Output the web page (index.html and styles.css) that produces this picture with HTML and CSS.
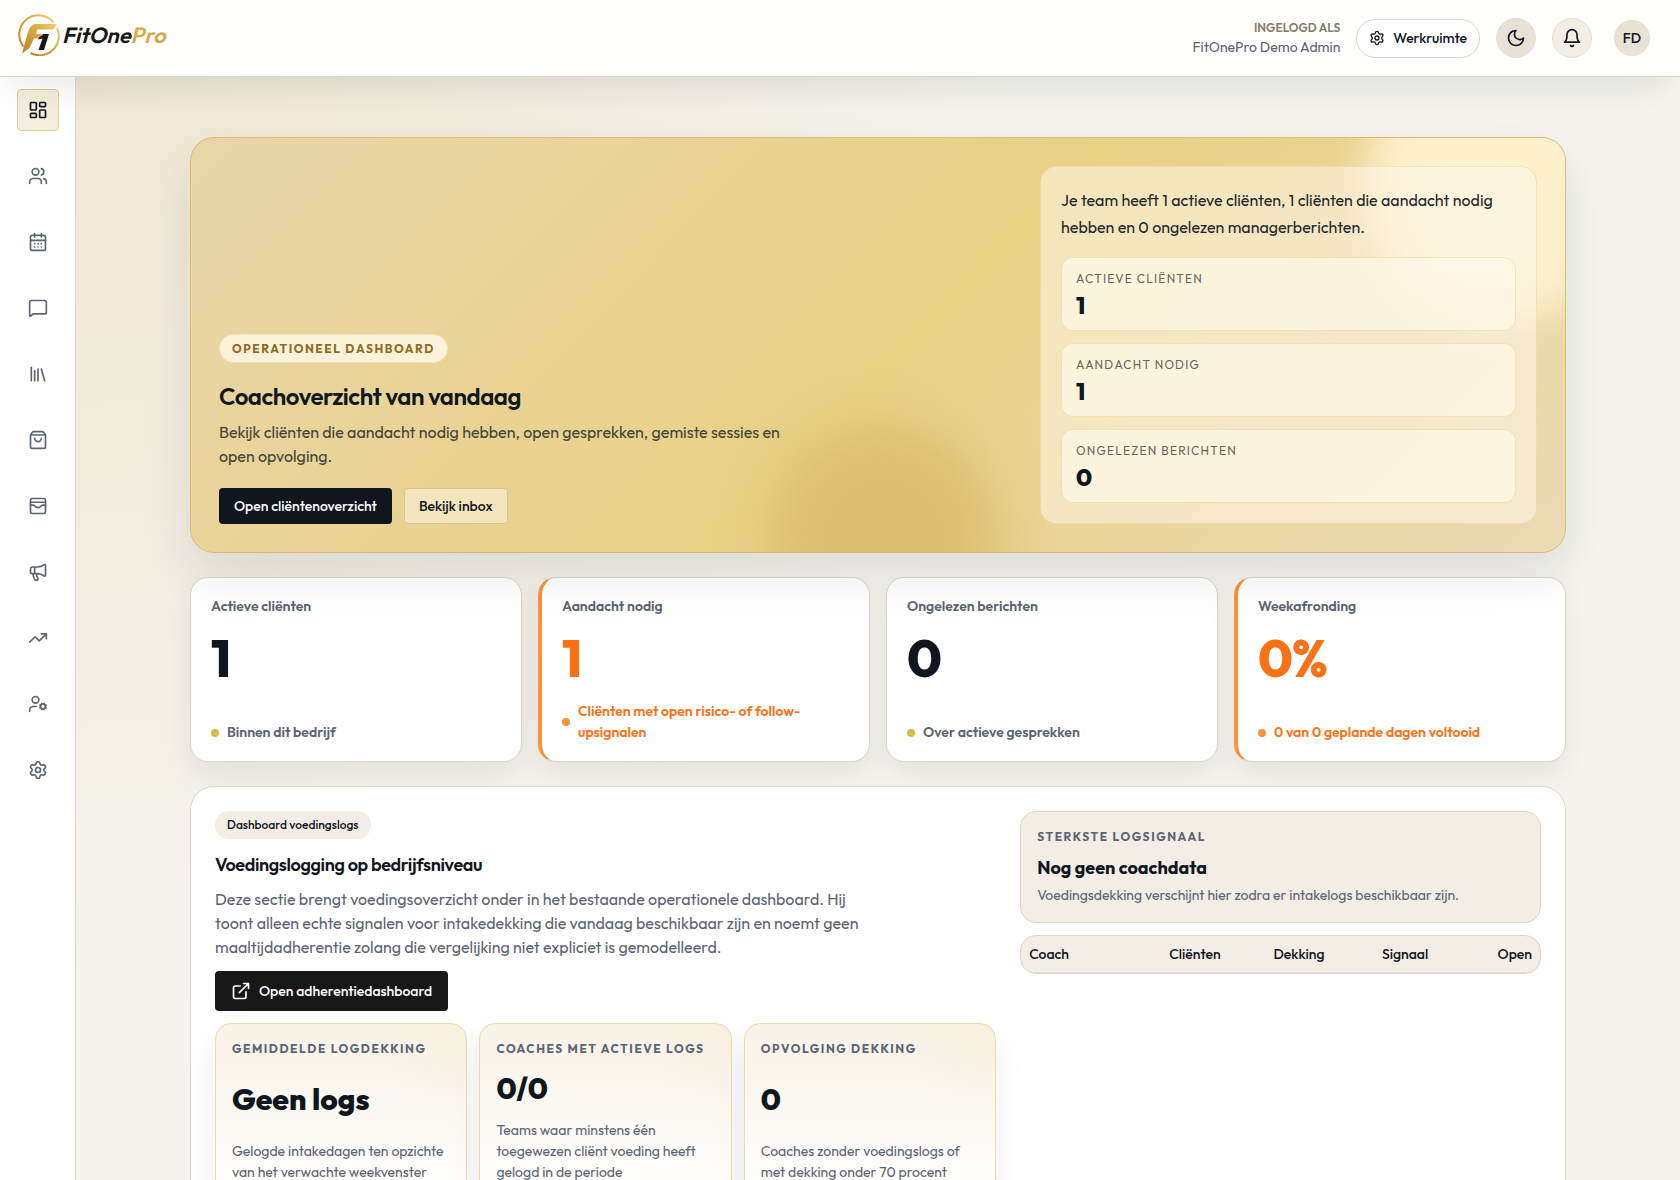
FILE: index.html
```html
<!DOCTYPE html>
<html lang="nl">
<head>
<meta charset="utf-8">
<meta name="viewport" content="width=device-width, initial-scale=1">
<title>FitOnePro – Dashboard</title>
<link rel="stylesheet" href="styles.css">
</head>
<body>
<header class="topbar">
  <a class="logo" href="#" aria-label="FitOnePro">
    <svg class="logo-mark" viewBox="0 0 42 42" aria-hidden="true">
      <defs>
        <linearGradient id="gold" x1="0" y1="1" x2="1" y2="0">
          <stop offset="0" stop-color="#b9822a"/><stop offset=".55" stop-color="#d8a63f"/><stop offset="1" stop-color="#f0d070"/>
        </linearGradient>
      </defs>
      <path d="M35.500 8.500A19.200 19.200 0 0 0 5.500 32.500" fill="none" stroke="url(#gold)" stroke-width="2"/>
      <path d="M39 14A19.200 19.200 0 0 1 12.500 39" fill="none" stroke="url(#gold)" stroke-width="2"/>
      <path d="M16.500 10H39L35 15.500H19.500L18 20H27L23.500 24.500H16L11.500 34L4 39.500L10 18Q12.500 11 16.500 10Z" fill="url(#gold)"/>
      <path d="M25.500 20H31L26 36H20.500L24.500 24.500L20 25.500L21.500 23Q24 22 25.500 20Z" fill="#181818"/>
    </svg>
    <span class="logo-text">FitOne<span class="logo-pro">Pro</span></span>
  </a>
  <div class="topbar-tools">
    <div class="session"><span class="session-label">INGELOGD ALS</span><span class="session-name">FitOnePro Demo Admin</span></div>
    <button class="workspace" type="button">
      <svg class="icon-sm" viewBox="0 0 24 24"><path d="M9.671 4.136a2.340 2.340 0 0 1 4.659 0 2.340 2.340 0 0 0 3.319 1.915 2.340 2.340 0 0 1 2.330 4.033 2.340 2.340 0 0 0 0 3.831 2.340 2.340 0 0 1-2.330 4.033 2.340 2.340 0 0 0-3.319 1.915 2.340 2.340 0 0 1-4.659 0 2.340 2.340 0 0 0-3.320-1.915 2.340 2.340 0 0 1-2.330-4.033 2.340 2.340 0 0 0 0-3.831A2.340 2.340 0 0 1 6.350 6.051a2.340 2.340 0 0 0 3.319-1.915"/><circle cx="12" cy="12" r="3"/></svg>
      Werkruimte
    </button>
    <button class="round round-dark" type="button" aria-label="Donkere modus"><svg class="icon" viewBox="0 0 24 24"><path d="M12 3a6 6 0 0 0 9 9 9 9 0 1 1-9-9Z"/></svg></button>
    <button class="round" type="button" aria-label="Meldingen"><svg class="icon" viewBox="0 0 24 24"><path d="M6 8a6 6 0 0 1 12 0c0 7 3 9 3 9H3s3-2 3-9"/><path d="M10.300 21a1.940 1.940 0 0 0 3.400 0"/></svg></button>
    <button class="avatar" type="button" aria-label="Account">FD</button>
  </div>
</header>
<div class="shell">
  <nav class="sidebar" aria-label="Hoofdmenu">
    <a class="nav-item active" href="#" aria-label="Dashboard"><svg class="icon" viewBox="0 0 24 24"><rect x="3" y="3" width="7" height="9" rx="1"/><rect x="14" y="3" width="7" height="5" rx="1"/><rect x="14" y="12" width="7" height="9" rx="1"/><rect x="3" y="16" width="7" height="5" rx="1"/></svg></a>
    <a class="nav-item" href="#" aria-label="Cliënten"><svg class="icon" viewBox="0 0 24 24"><path d="M16 21v-2a4 4 0 0 0-4-4H6a4 4 0 0 0-4 4v2"/><circle cx="9" cy="7" r="4"/><path d="M22 21v-2a4 4 0 0 0-3-3.870"/><path d="M16 3.130a4 4 0 0 1 0 7.750"/></svg></a>
    <a class="nav-item" href="#" aria-label="Agenda"><svg class="icon" viewBox="0 0 24 24"><rect x="3" y="4" width="18" height="18" rx="2"/><path d="M16 2v4M8 2v4M3 10h18M8 14h.01M12 14h.01M16 14h.01M8 18h.01M12 18h.01M16 18h.01"/></svg></a>
    <a class="nav-item" href="#" aria-label="Berichten"><svg class="icon" viewBox="0 0 24 24"><path d="M22 17a2 2 0 0 1-2 2H6.828a2 2 0 0 0-1.414.586l-2.202 2.202A.710.710 0 0 1 2 21.286V5a2 2 0 0 1 2-2h16a2 2 0 0 1 2 2z"/></svg></a>
    <a class="nav-item" href="#" aria-label="Bibliotheek"><svg class="icon" viewBox="0 0 24 24"><path d="m16 6 4 14M12 6v14M8 8v12M4 4v16"/></svg></a>
    <a class="nav-item" href="#" aria-label="Winkel"><svg class="icon" viewBox="0 0 24 24"><path d="M3.103 6.034h17.794M3.400 5.467a2 2 0 0 0-.400 1.200V20a2 2 0 0 0 2 2h14a2 2 0 0 0 2-2V6.667a2 2 0 0 0-.400-1.200l-2-2.667A2 2 0 0 0 17 2H7a2 2 0 0 0-1.600.800zM16 10a4 4 0 0 1-8 0"/></svg></a>
    <a class="nav-item" href="#" aria-label="Betalingen"><svg class="icon" viewBox="0 0 24 24"><rect x="3" y="3" width="18" height="18" rx="2"/><path d="M3 7.500h18M3 11h3c.800 0 1.600.300 2.100.900l1.100.900c1.600 1.600 4.100 1.600 5.700 0l1.100-.900c.500-.500 1.300-.900 2.100-.900H21"/></svg></a>
    <a class="nav-item" href="#" aria-label="Marketing"><svg class="icon" viewBox="0 0 24 24"><path d="M11 6a13 13 0 0 0 8.400-2.800A1 1 0 0 1 21 4v12a1 1 0 0 1-1.600.800A13 13 0 0 0 11 14H5a2 2 0 0 1-2-2V8a2 2 0 0 1 2-2zM6 14a12 12 0 0 0 2.400 7.200 2 2 0 0 0 3.200-2.400A8 8 0 0 1 10 14M8 6v8"/></svg></a>
    <a class="nav-item" href="#" aria-label="Voortgang"><svg class="icon" viewBox="0 0 24 24"><path d="M16 7h6v6"/><path d="m22 7-8.500 8.500-5-5L2 17"/></svg></a>
    <a class="nav-item" href="#" aria-label="Teambeheer"><svg class="icon" viewBox="0 0 24 24"><path d="M10 15H6a4 4 0 0 0-4 4v2"/><circle cx="9" cy="7" r="4"/><circle cx="18" cy="15" r="3"/><path d="m14.305 16.530.923-.382M15.228 13.852l-.923-.383M16.852 12.228l-.383-.923M16.852 17.772l-.383.924M19.148 12.228l.383-.923M19.530 18.696l-.382-.924M20.772 13.852l.924-.383M20.772 16.148l.924.383"/></svg></a>
    <a class="nav-item" href="#" aria-label="Instellingen"><svg class="icon" viewBox="0 0 24 24"><path d="M9.671 4.136a2.340 2.340 0 0 1 4.659 0 2.340 2.340 0 0 0 3.319 1.915 2.340 2.340 0 0 1 2.330 4.033 2.340 2.340 0 0 0 0 3.831 2.340 2.340 0 0 1-2.330 4.033 2.340 2.340 0 0 0-3.319 1.915 2.340 2.340 0 0 1-4.659 0 2.340 2.340 0 0 0-3.320-1.915 2.340 2.340 0 0 1-2.330-4.033 2.340 2.340 0 0 0 0-3.831A2.340 2.340 0 0 1 6.350 6.051a2.340 2.340 0 0 0 3.319-1.915"/><circle cx="12" cy="12" r="3"/></svg></a>
  </nav>
  <main class="main">
    <div class="content">
      <section class="hero">
        <div class="hero-intro">
          <span class="hero-badge">OPERATIONEEL DASHBOARD</span>
          <h1 class="hero-title">Coachoverzicht van vandaag</h1>
          <p class="hero-text">Bekijk cliënten die aandacht nodig hebben, open gesprekken, gemiste sessies en open opvolging.</p>
          <div class="hero-actions">
            <button class="btn btn-dark" type="button">Open cliëntenoverzicht</button>
            <button class="btn btn-light" type="button">Bekijk inbox</button>
          </div>
        </div>
        <div class="brief">
          <p class="brief-text">Je team heeft 1 actieve cliënten, 1 cliënten die aandacht nodig hebben en 0 ongelezen managerberichten.</p>
          <div class="brief-stat"><span class="brief-label">ACTIEVE CLIËNTEN</span><strong class="brief-value">1</strong></div>
          <div class="brief-stat"><span class="brief-label">AANDACHT NODIG</span><strong class="brief-value">1</strong></div>
          <div class="brief-stat"><span class="brief-label">ONGELEZEN BERICHTEN</span><strong class="brief-value">0</strong></div>
        </div>
      </section>
      <section class="kpis">
        <article class="kpi"><h2 class="kpi-label">Actieve cliënten</h2><strong class="kpi-value">1</strong><p class="kpi-note"><span class="dot"></span>Binnen dit bedrijf</p></article>
        <article class="kpi alert"><h2 class="kpi-label">Aandacht nodig</h2><strong class="kpi-value">1</strong><p class="kpi-note"><span class="dot"></span>Cliënten met open risico- of follow-upsignalen</p></article>
        <article class="kpi"><h2 class="kpi-label">Ongelezen berichten</h2><strong class="kpi-value">0</strong><p class="kpi-note"><span class="dot"></span>Over actieve gesprekken</p></article>
        <article class="kpi alert"><h2 class="kpi-label">Weekafronding</h2><strong class="kpi-value">0%</strong><p class="kpi-note"><span class="dot"></span>0 van 0 geplande dagen voltooid</p></article>
      </section>
      <section class="panel">
        <div class="panel-main">
          <span class="pill">Dashboard voedingslogs</span>
          <h2 class="panel-title">Voedingslogging op bedrijfsniveau</h2>
          <p class="panel-text">Deze sectie brengt voedingsoverzicht onder in het bestaande operationele dashboard. Hij toont alleen echte signalen voor intakedekking die vandaag beschikbaar zijn en noemt geen maaltijdadherentie zolang die vergelijking niet expliciet is gemodelleerd.</p>
          <button class="btn btn-open" type="button"><svg class="icon" viewBox="0 0 24 24"><path d="M15 3h6v6M10 14 21 3M18 13v6a2 2 0 0 1-2 2H5a2 2 0 0 1-2-2V8a2 2 0 0 1 2-2h6"/></svg>Open adherentiedashboard</button>
          <div class="metrics">
            <article class="metric"><h3 class="overline">GEMIDDELDE LOGDEKKING</h3><strong class="metric-value">Geen logs</strong><p class="metric-text">Gelogde intakedagen ten opzichte van het verwachte weekvenster</p></article>
            <article class="metric"><h3 class="overline">COACHES MET ACTIEVE LOGS</h3><strong class="metric-value">0/0</strong><p class="metric-text">Teams waar minstens één toegewezen cliënt voeding heeft gelogd in de periode</p></article>
            <article class="metric"><h3 class="overline">OPVOLGING DEKKING</h3><strong class="metric-value">0</strong><p class="metric-text">Coaches zonder voedingslogs of met dekking onder 70 procent</p></article>
          </div>
        </div>
        <div class="panel-side">
          <article class="signal"><h3 class="overline">STERKSTE LOGSIGNAAL</h3><strong class="signal-title">Nog geen coachdata</strong><p class="signal-text">Voedingsdekking verschijnt hier zodra er intakelogs beschikbaar zijn.</p></article>
          <div class="table-wrap">
            <table class="coach-table"><thead><tr><th scope="col">Coach</th><th scope="col">Cliënten</th><th scope="col">Dekking</th><th scope="col">Signaal</th><th scope="col">Open</th></tr></thead></table>
          </div>
        </div>
      </section>
    </div>
  </main>
</div>
</body>
</html>
```
FILE: styles.css
```css
* { box-sizing: border-box; }
body {
  margin: 0;
  font: 400 16px/24px Outfit, Lato, sans-serif;
  color: #10161d;
  background: #f5f4ef;
}
h1, h2, h3, p { margin: 0; }
button { font: inherit; color: inherit; cursor: pointer; }
svg { flex: none; }
.icon, .icon-sm {
  width: 20px; height: 20px;
  fill: none; stroke: currentColor; stroke-width: 2;
  stroke-linecap: round; stroke-linejoin: round;
}
.icon-sm { width: 16px; height: 16px; }

/* Top bar */
.topbar {
  position: sticky; top: 0; z-index: 2;
  display: flex; align-items: center; justify-content: space-between;
  height: 77px; padding: 0 30px 0 18px;
  background: #fffefc;
  border-bottom: 1px solid #ddd6c8;
  box-shadow: 0 18px 40px -12px rgba(15, 23, 42, .12);
}
.logo { display: flex; align-items: center; gap: 2px; padding-bottom: 6px; color: #181818; text-decoration: none; }
.logo-mark { width: 42px; height: 42px; }
.logo-text { font-size: 22px; font-style: italic; font-weight: 600; }
.logo-pro { color: #d9aa4c; }
.topbar-tools { display: flex; align-items: center; gap: 16px; }
.session { display: flex; flex-direction: column; align-items: flex-end; }
.session-label { font-size: 12px; line-height: 18px; font-weight: 600; color: #857b6b; }
.session-name { font-size: 14px; line-height: 20px; color: #5b6472; }
.workspace {
  display: flex; align-items: center; gap: 8px;
  height: 39px; padding: 0 12px;
  border: 1px solid #ddd6c8; border-radius: 20px; background: #fff;
  font-size: 14px; font-weight: 500;
}
.round, .avatar {
  display: flex; align-items: center; justify-content: center;
  width: 40px; height: 40px; padding: 0;
  border: 1px solid #e5dfd3; border-radius: 50%; background: #f2ede5;
}
.round-dark { background: #e8e1d6; }
.avatar { width: 36px; height: 36px; margin-left: 6px; background: #e8e1d6; font-size: 14px; font-weight: 500; }

/* Shell */
.shell { display: flex; min-height: calc(100vh - 77px); }
.sidebar {
  display: flex; flex-direction: column; align-items: center; gap: 24px;
  flex: none; width: 76px; padding-top: 12px;
  background: #fff; border-right: 1px solid #ddd9d0;
}
.nav-item {
  display: flex; align-items: center; justify-content: center;
  width: 42px; height: 42px;
  border: 1px solid transparent; border-radius: 4px; color: #5b6472;
}
.nav-item.active { background: #f6eedc; border-color: #e3cc8f; color: #10161d; }
.main {
  flex: 1; min-width: 0; padding: 60px 32px 32px;
  background: radial-gradient(circle at 0 0, rgba(226, 188, 120, .22), transparent 940px);
}
.content { display: flex; flex-direction: column; gap: 24px; max-width: 1376px; margin: 0 auto; }

/* Hero */
.hero {
  position: relative; overflow: hidden; isolation: isolate;
  display: grid; grid-template-columns: 8fr 5fr; gap: 26px;
  padding: 28px;
  border: 1px solid #dcbc6a; border-radius: 24px;
  background: linear-gradient(135deg, #e8d6aa, #e9d185 52%, #ebdab5);
  box-shadow: 0 20px 50px rgba(15, 23, 42, .11);
}
.hero::before, .hero::after { content: ""; position: absolute; z-index: -1; border-radius: 50%; }
.hero::before { width: 272px; height: 272px; top: -88px; right: -72px; background: #fdf0cc; filter: blur(20px); }
.hero::after { width: 232px; height: 232px; bottom: -104px; left: 42%; background: #dbbe6f; filter: blur(28px); }
.hero-intro { display: flex; flex-direction: column; align-items: flex-start; justify-content: flex-end; }
.hero-badge {
  padding: 4px 12px; border: 1px solid #f3e3b8; border-radius: 16px;
  background: #fbf2da; color: #8c6a20;
  font-size: 12px; line-height: 19px; font-weight: 700; letter-spacing: 0.13em;
}
.hero-title { margin-top: 15px; font-size: 24px; line-height: 36px; font-weight: 600; letter-spacing: -0.02em; }
.hero-text { max-width: 580px; margin-top: 6px; color: #44433a; }
.hero-actions { display: flex; gap: 12px; margin-top: 20px; }
.btn { height: 36px; padding: 0 14px; border: 1px solid transparent; border-radius: 4px; font-size: 14px; line-height: 20px; font-weight: 500; }
.btn-dark { background: #10161d; color: #fff; }
.btn-light { background: #f4e5bd; border-color: #d8c698; }
.brief {
  display: flex; flex-direction: column; gap: 12px; padding: 20px;
  border: 1px solid rgba(220, 188, 106, .3); border-radius: 16px;
  background: rgba(255, 250, 240, .5);
}
.brief-text { margin-bottom: 4px; line-height: 27px; color: #22272b; }
.brief-stat {
  display: flex; flex-direction: column; gap: 4px; padding: 12px 14px;
  border: 1px solid rgba(220, 188, 106, .35); border-radius: 12px;
  background: rgba(255, 248, 230, .75);
}
.brief-label { font-size: 12px; line-height: 18px; letter-spacing: 0.1em; color: #66665f; }
.brief-value { font-size: 24px; line-height: 26px; font-weight: 800; }

/* KPI row */
.kpis { display: grid; grid-template-columns: repeat(4, 1fr); gap: 16px; }
.kpi {
  display: flex; flex-direction: column;
  min-height: 185px; padding: 18px 20px;
  border: 1px solid #ddd6c8; border-radius: 18px;
  background: #fff;
  box-shadow: 0 14px 32px rgba(15, 23, 42, .07);
}
.kpi-label { font-size: 14px; line-height: 21px; font-weight: 600; color: #5b6472; }
.kpi-value { margin-top: 13px; font-size: 52px; line-height: 56px; font-weight: 800; letter-spacing: -0.02em; }
.kpi-note { display: flex; align-items: center; gap: 8px; margin-top: auto; font-size: 14px; line-height: 21px; font-weight: 600; color: #5b6472; }
.dot { flex: none; width: 8px; height: 8px; border-radius: 50%; background: #ddb945; }
.alert { border-left: 4px solid #fb923c; }
.alert .kpi-value, .alert .kpi-note { color: #f97316; }
.alert .dot { background: #fb923c; }

/* Nutrition panel */
.panel {
  display: grid; grid-template-columns: 3fr 2fr; gap: 24px; align-items: start;
  padding: 24px; border: 1px solid #ddd6c8; border-radius: 24px; background: #fff;
}
.panel-main { display: flex; flex-direction: column; align-items: flex-start; }
.pill { padding: 4px 12px; border-radius: 14px; background: #f2ede5; font-size: 12px; line-height: 20px; font-weight: 500; }
.panel-title { margin-top: 12px; font-size: 18px; line-height: 28px; font-weight: 600; letter-spacing: -0.02em; }
.panel-text { max-width: 672px; margin-top: 8px; color: #5b6472; }
.btn-open { display: flex; align-items: center; gap: 8px; height: 40px; margin-top: 12px; padding: 0 15px; background: #171717; color: #fff; }
.metrics { display: grid; grid-template-columns: repeat(3, 1fr); gap: 12px; width: 100%; margin-top: 12px; }
.metric {
  display: flex; flex-direction: column; justify-content: space-between; gap: 12px;
  padding: 16px; border: 1px solid #ecdcb4; border-radius: 16px;
  background: radial-gradient(circle at 100% 0, rgba(240, 215, 160, .15), transparent 90px), linear-gradient(#f8f3e7, #fff);
  box-shadow: 0 14px 32px rgba(15, 23, 42, .07);
}
.overline { font-size: 12px; line-height: 18px; font-weight: 700; letter-spacing: 0.13em; color: #5b6472; }
.metric-value { font-size: 30px; line-height: 36px; font-weight: 800; margin-bottom: 2px; }
.metric-text, .signal-text { font-size: 14px; line-height: 21px; color: #5b6472; }
.panel-side { display: flex; flex-direction: column; gap: 12px; }
.signal { padding: 16px; border: 1px solid #ddd6c8; border-radius: 16px; background: #f2ede5; }
.signal-title { display: block; margin: 8px 0 4px; font-size: 18px; line-height: 27px; font-weight: 700; }
.table-wrap { overflow: hidden; border: 1px solid #ddd6c8; border-radius: 16px; background: #f2ede5; }
.coach-table { width: 100%; table-layout: fixed; border-collapse: separate; border-spacing: 0; }
.coach-table th { height: 37px; padding: 0 8px; border-bottom: 1px solid #e5dfd3; font-size: 14px; line-height: 20px; font-weight: 500; text-align: right; }
.coach-table th:first-child { text-align: left; }
```
